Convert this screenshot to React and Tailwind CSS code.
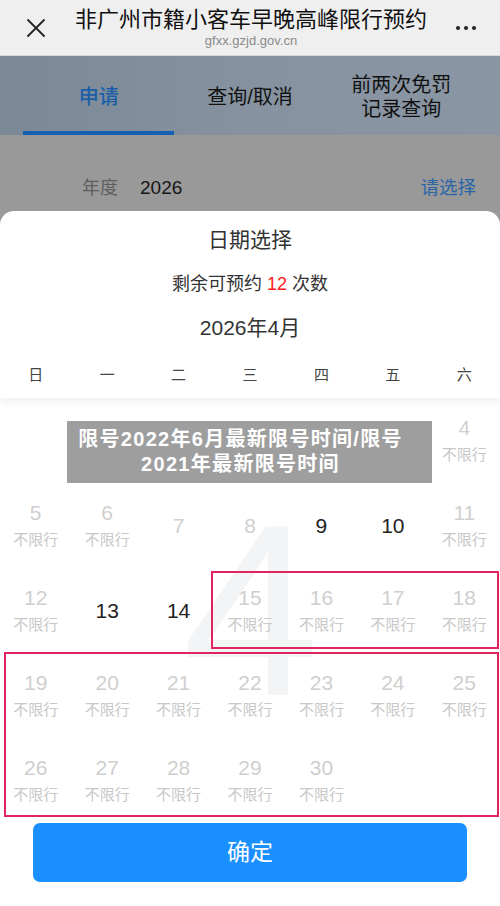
import React from 'react';

const FONT = { fontFamily: '"Liberation Sans", "Noto Sans CJK SC", sans-serif' };

const L = 'light';
const D = 'dark';
const N = 'nolabel';

const weeks = [
  [null, null, null, [1, L], [2, L], [3, L], [4, L]],
  [[5, L], [6, L], [7, N], [8, N], [9, D], [10, D], [11, L]],
  [[12, L], [13, D], [14, D], [15, L], [16, L], [17, L], [18, L]],
  [[19, L], [20, L], [21, L], [22, L], [23, L], [24, L], [25, L]],
  [[26, L], [27, L], [28, L], [29, L], [30, L], null, null],
];

const weekdays = ['日', '一', '二', '三', '四', '五', '六'];

const DayCell = ({ day }) => {
  if (!day) return <div className="h-[85px]" />;
  const [num, kind] = day;
  if (kind === D) {
    return (
      <div className="h-[85px] flex items-center justify-center">
        <span className="text-[21px] leading-[26px] text-[#222]">{num}</span>
      </div>
    );
  }
  if (kind === N) {
    return (
      <div className="h-[85px] flex items-center justify-center">
        <span className="text-[21px] leading-[26px] text-[#cfcfcf]">{num}</span>
      </div>
    );
  }
  return (
    <div className="h-[85px] flex flex-col items-center justify-center gap-[3px]">
      <span className="text-[21px] leading-[26px] text-[#cfcfcf]">{num}</span>
      <span className="text-[15px] leading-[22px] text-[#c8c8c8]">不限行</span>
    </div>
  );
};

export default function App() {
  return (
    <div className="w-[500px] h-[906px] overflow-hidden bg-white flex flex-col" style={FONT}>
      {/* browser header */}
      <div className="h-[56px] bg-[#efefef] flex items-center px-[26px] border-b border-[#d8d8d8]">
        <svg width="20" height="20" viewBox="0 0 20 20" className="shrink-0">
          <path d="M2 2 L18 18 M18 2 L2 18" stroke="#222" strokeWidth="1.8" strokeLinecap="round" />
        </svg>
        <div className="flex-1 flex flex-col items-center">
          <div className="text-[22px] leading-[26px] text-[#111]">非广州市籍小客车早晚高峰限行预约</div>
          <div className="text-[13px] leading-[16px] text-[#8a8a8a]">gfxx.gzjd.gov.cn</div>
        </div>
        <div className="flex items-center gap-[4px] shrink-0 mr-[-2px]">
          <span className="w-[4px] h-[4px] rounded-full bg-[#222]" />
          <span className="w-[4px] h-[4px] rounded-full bg-[#222]" />
          <span className="w-[4px] h-[4px] rounded-full bg-[#222]" />
        </div>
      </div>

      {/* dimmed page */}
      <div className="h-[79px] bg-gradient-to-r from-[#7b8896] via-[#86929f] to-[#8a96a3] flex px-[23px]">
        <div className="flex-1 flex flex-col">
          <div className="flex-1 flex items-center justify-center pt-[6px] text-[20px] font-medium text-[#1a5fa8]">申请</div>
          <div className="h-[4px] bg-[#1560b0]" />
        </div>
        <div className="flex-1 flex flex-col">
          <div className="flex-1 flex items-center justify-center pt-[6px] text-[20px] text-[#111]">查询/取消</div>
          <div className="h-[4px]" />
        </div>
        <div className="flex-1 flex flex-col">
          <div className="flex-1 flex flex-col items-center justify-center pt-[6px] text-[20px] leading-[24px] text-[#111]">
            <span>前两次免罚</span>
            <span>记录查询</span>
          </div>
          <div className="h-[4px]" />
        </div>
      </div>
      <div className="h-[76px] bg-[#999999] flex flex-col">
        <div className="mt-[38px] h-[30px] flex items-center pl-[82px] pr-[24px]">
          <span className="text-[18px] text-[#5e5e5e]">年度</span>
          <span className="text-[19px] text-[#161616] ml-[22px]">2026</span>
          <span className="ml-auto text-[18.5px] text-[#2a66a6]">请选择</span>
        </div>
      </div>

      {/* date sheet */}
      <div className="flex-1 bg-[#999999]">
        <div className="h-full bg-white rounded-t-[14px] flex flex-col pt-[5px]">
          <div className="h-[48px] flex items-center justify-center text-[21px] text-[#333]">日期选择</div>
          <div className="h-[40px] flex items-center justify-center text-[18px] text-[#333]">
            剩余可预约 <span className="text-[#ff1a1a] mx-[5px]">12</span> 次数
          </div>
          <div className="h-[48px] flex items-center justify-center text-[21px] text-[#333]">2026年4月</div>
          <div className="h-[46px] grid grid-cols-7 items-center shadow-[0_5px_8px_rgba(0,0,0,0.05)] relative z-20 bg-white">
            {weekdays.map((w) => (
              <div key={w} className="text-center text-[15px] text-[#444]">{w}</div>
            ))}
          </div>

          <div className="relative">
            <div className="absolute inset-0 flex items-center justify-center pointer-events-none">
              <span className="text-[245px] leading-none text-[#f3f4f6] ml-[2px]">4</span>
            </div>
            <div className="relative z-10 grid grid-cols-7">
              {weeks.flat().map((d, i) => (
                <DayCell key={i} day={d} />
              ))}
            </div>
            <div className="absolute z-10 left-[211px] right-[1px] top-[173px] h-[78px] border-2 border-[#e0245e]" />
            <div className="absolute z-10 left-[4px] right-[1px] top-[254px] h-[165px] border-2 border-[#e0245e]" />
            <div className="absolute z-30 left-[67px] w-[365px] top-[23px] h-[62px] bg-[#9e9e9e] flex flex-col items-center justify-center pr-[18px] text-white font-bold text-[20px] leading-[25px] tracking-[1.3px]">
              <span>限号2022年6月最新限号时间/限号</span>
              <span>2021年最新限号时间</span>
            </div>
          </div>

          <div className="mx-[33px] h-[59px] rounded-[7px] bg-[#1a8fff] flex items-center justify-center text-white text-[23px]">
            确定
          </div>
        </div>
      </div>
    </div>
  );
}
